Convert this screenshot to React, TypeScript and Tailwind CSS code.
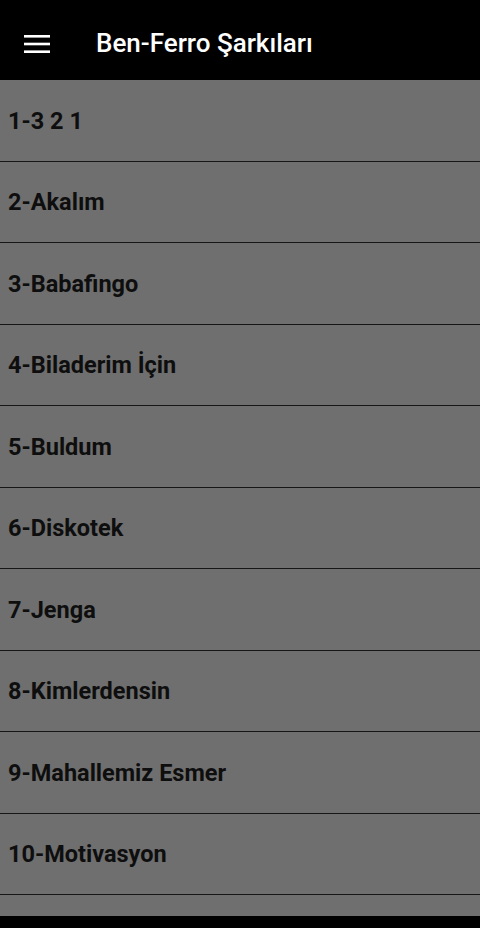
const SONGS = [
  '1-3 2 1',
  '2-Akalım',
  '3-Babafingo',
  '4-Biladerim İçin',
  '5-Buldum',
  '6-Diskotek',
  '7-Jenga',
  '8-Kimlerdensin',
  '9-Mahallemiz Esmer',
  '10-Motivasyon',
];

function MenuIcon() {
  return (
    <svg width="26" height="18" viewBox="0 0 26 18" fill="none">
      <rect x="0" y="0" width="26" height="2.6" fill="white" />
      <rect x="0" y="7.7" width="26" height="2.6" fill="white" />
      <rect x="0" y="15.4" width="26" height="2.6" fill="white" />
    </svg>
  );
}

export default function App() {
  return (
    <div
      className="w-[480px] h-[928px] flex flex-col bg-[#6f6f6f] overflow-hidden"
      style={{ fontFamily: 'Roboto, "Noto Sans", sans-serif' }}
    >
      <header className="h-[80px] shrink-0 bg-black flex items-center pt-[7px]">
        <div className="ml-[24px] w-[26px] flex items-center">
          <MenuIcon />
        </div>
        <h1 className="ml-[46px] text-white text-[26px] font-medium">
          Ben-Ferro Şarkıları
        </h1>
      </header>

      <ul className="flex-1 overflow-hidden">
        {SONGS.map((song) => (
          <li
            key={song}
            className="h-[81.5px] flex items-center px-[8px] pt-[2px] border-b-[1.5px] border-[#161616]"
          >
            <span className="text-[#0e0e0e] text-[23.5px] font-bold">{song}</span>
          </li>
        ))}
      </ul>

      <div className="h-[12px] shrink-0 bg-black" />
    </div>
  );
}
